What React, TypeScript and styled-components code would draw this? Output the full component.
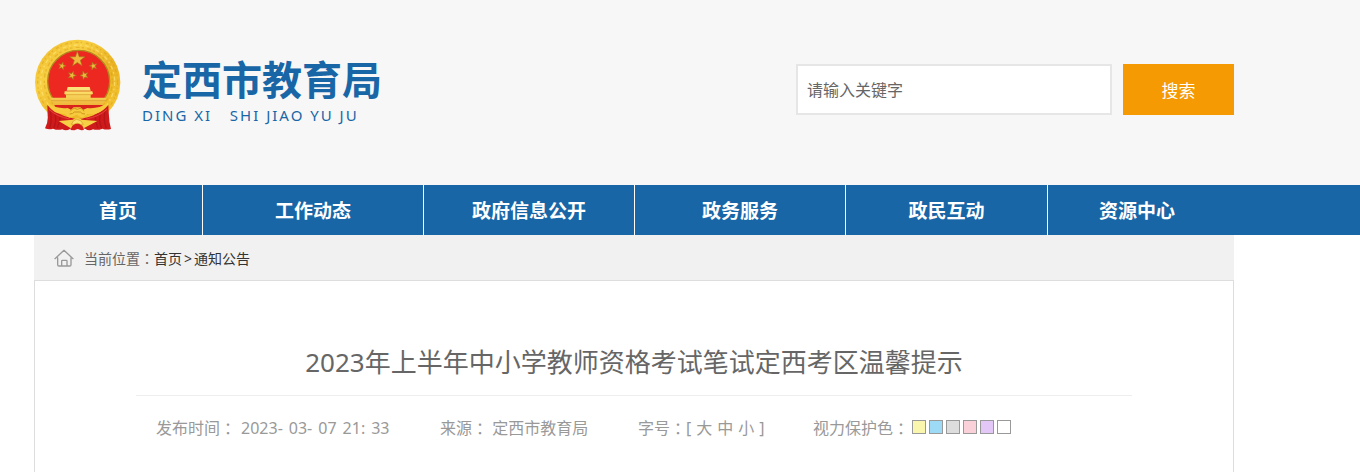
import React from 'react';
import styled, { createGlobalStyle } from 'styled-components';

const GlobalStyle = createGlobalStyle`
  * { box-sizing: border-box; }
  body {
    margin: 0;
    background: #fff;
    color: #666;
    font-family: 'Noto Sans', 'Noto Sans CJK SC', sans-serif;
    font-size: 16px;
  }
  a { color: inherit; text-decoration: none; }
  h1, h2, p, ul { margin: 0; padding: 0; }
  button, input { font-family: inherit; }
`;

const Container = styled.div`
  max-width: 1360px;
  padding: 0 126px 0 34px;
`;

const Header = styled.header`
  background: #f7f7f7;
`;

const HeaderRow = styled(Container)`
  display: flex;
  align-items: center;
  justify-content: space-between;
  min-height: 185px;
  padding-bottom: 6px;
`;

const Brand = styled.a`
  display: flex;
  align-items: center;
  gap: 20px;
  padding-bottom: 10px;
  color: #1966a7;
`;

const BrandText = styled.div`
  padding-top: 12px;
`;

const BrandName = styled.h1`
  font-size: 40px;
  line-height: 48px;
  font-weight: 700;
`;

const BrandPinyin = styled.p`
  font-size: 15px;
  line-height: 22px;
  letter-spacing: 2px;
  white-space: pre;
`;

const SearchForm = styled.form`
  display: flex;
  gap: 11px;
`;

const SearchInput = styled.input`
  width: 316px;
  height: 51px;
  padding: 0 9px;
  border: 2px solid #e6e6e6;
  background: #fff;
  color: #666;
  font-size: 16px;
  &::placeholder { color: #666; opacity: 1; }
`;

const SearchButton = styled.button`
  width: 111px;
  height: 51px;
  border: 0;
  padding: 0;
  background: #f59a02;
  color: #fff;
  font-size: 17px;
`;

const Nav = styled.nav`
  background: #1966a7;
`;

const NavList = styled.ul`
  display: grid;
  grid-template-columns: 169fr 221fr 211fr 211fr 202fr 178fr;
  padding-right: 8px;
  list-style: none;
`;

const NavItem = styled.li`
  border-right: 1px solid #fff;
  &:last-child { border-right: 0; }
`;

const NavLink = styled.a`
  display: block;
  padding-top: 2px;
  color: #fff;
  font-size: 19px;
  font-weight: 700;
  line-height: 48px;
  text-align: center;
`;

const Breadcrumb = styled.nav`
  display: flex;
  align-items: center;
  height: 45px;
  padding: 0 20px;
  background: #f1f1f1;
  font-size: 14px;
  svg { margin-right: 10px; }
`;

const Crumbs = styled.span`
  display: flex;
  align-items: baseline;
  gap: 2px;
  color: #333;
`;

const Colon = styled.span`
  font-family: 'Noto Sans CJK TC', sans-serif;
`;

const Article = styled.article`
  padding: 56px 101px 32px;
  border: 1px solid #ddd;
  border-bottom: 0;
`;

const Title = styled.h2`
  padding-bottom: 8px;
  border-bottom: 1px solid #eee;
  font-size: 26px;
  line-height: 50px;
  font-weight: 400;
  text-align: center;
`;

const Meta = styled.div`
  display: grid;
  grid-template-columns: 284px 198px 175px auto;
  padding: 20px 20px 0;
  color: #999;
  font-size: 16px;
  line-height: 24px;
`;

const MetaItem = styled.div`
  display: flex;
  white-space: pre;
`;

const DateParts = styled.time`
  display: flex;
  gap: 6px;
  padding-left: 5px;
`;

const SizeList = styled.span`
  display: flex;
  gap: 5px;
`;

const SizeButton = styled.button`
  padding: 0;
  border: 0;
  background: none;
  color: inherit;
  font-size: 16px;
  line-height: 24px;
`;

const Swatches = styled.span`
  display: flex;
  gap: 3px;
  padding: 4px 0 0 3px;
`;

const Swatch = styled.button<{ $color: string }>`
  width: 14px;
  height: 14px;
  padding: 0;
  border: 1px solid #999;
  background: ${({ $color }) => $color};
`;

const star = (cx: number, cy: number, r: number, turn = 0) =>
  Array.from({ length: 10 }, (_, i) => {
    const radius = i % 2 ? r * 0.4 : r;
    const angle = ((i * 36 - 90 + turn) * Math.PI) / 180;
    return `${cx + radius * Math.cos(angle)},${cy + radius * Math.sin(angle)}`;
  }).join(' ');

const Emblem = () => (
  <svg width="88" height="92" viewBox="27 27 264 276" aria-hidden="true">
    <defs>
      <linearGradient id="gold" x1="0" y1="0" x2="1" y2="1">
        <stop offset="0" stopColor="#edb92a" />
        <stop offset="0.3" stopColor="#f8d043" />
        <stop offset="0.6" stopColor="#eab324" />
        <stop offset="1" stopColor="#f9cd38" />
      </linearGradient>
      <linearGradient id="gate" x1="0" y1="0" x2="0" y2="1">
        <stop offset="0" stopColor="#fbe06a" />
        <stop offset="1" stopColor="#efb53a" />
      </linearGradient>
    </defs>
    <circle cx="158" cy="157" r="128" fill="url(#gold)" />
    <circle cx="158" cy="157" r="120" fill="none" stroke="#d99e1c" strokeOpacity="0.5" strokeWidth="4" strokeDasharray="9 7 4 11" />
    <circle cx="158" cy="156" r="111" fill="none" stroke="#ffe880" strokeOpacity="0.6" strokeWidth="4" strokeDasharray="12 8 5 9" />
    <circle cx="160" cy="154" r="102" fill="none" stroke="#d99e1c" strokeOpacity="0.5" strokeWidth="4" strokeDasharray="7 10 12 6" />
    <circle cx="161" cy="154" r="93" fill="#ec2820" stroke="#b08a1e" strokeWidth="4" />
    <g fill="#f0b93c" stroke="#a5761c" strokeWidth="2">
      <polygon points={star(157, 88, 24)} />
      <polygon points={star(111, 108, 12, 15)} />
      <polygon points={star(205, 108, 12, -15)} />
      <polygon points={star(141, 136, 13, 20)} />
      <polygon points={star(178, 136, 13, -20)} />
    </g>
    <path d="M128 171h66l3 11h-72z" fill="#fbe37a" />
    <path d="M119 184h83l2 8-7 2v9h48l-12 22H88l-13-22h48v-9l-5-2z" fill="url(#gate)" />
    <path d="M126 183h70M121 194h78M78 212h166" stroke="#d79a2a" strokeWidth="2" fill="none" />
    <path d="M88 225h146l-10 14-40 4h-58l-32-5z" fill="#d9221c" />
    <path d="M67 225q16 18 40 28 16 9 42 13h20q26-4 42-13 24-10 39-28 1 22 2 34 0 18 6 38-14 4-26-1-14 6-28 2-12 6-24-2l-22-4-22 4q-12 8-24 2-14 4-28-2-12 4-24-1 10-18 8-38z" fill="#cf1a1c" />
    <path d="M76 244q6 24-2 50M90 254q6 20-4 40M105 262q0 14-8 32M240 244q-6 24 4 50M226 254q-6 20 4 40M211 262q0 14 8 32" stroke="#a51014" strokeOpacity="0.6" strokeWidth="4" fill="none" />
    <path d="M72 238q24 22 62 29M246 238q-24 22-62 29" stroke="#e8433a" strokeWidth="3" fill="none" />
    <path d="M101 273l42-4q15-10 28 0l46 4-41 22-9-11q-10-7-20 0l-7 12z" fill="#f7cf45" />
    <path d="M139 283l7-11 9-4 12 4 8 11h-8q-10-7-20 0z" fill="#fbe06a" stroke="#d09a25" strokeWidth="2" />
    <path d="M136 300l6-13q15-10 30 0l5 13-8 1-11-4-10 4z" fill="#d51f1c" />
    <path d="M68 220q30 18 60 14l10 5 8-7h20l9 7 12-5q30 4 62-14-12 26-38 31l-25 2-14 10-9-4q-9-7-18 0l-12 4-14-10-20-3q-24-8-31-30z" fill="#f6ca3c" />
    <path d="M136 244q4-9 13-9l8 3 8-3q8 0 12 9M134 252q10 0 14-6h18q4 6 14 6" stroke="#cf9420" strokeWidth="3" fill="none" />
  </svg>
);

const HomeIcon = () => (
  <svg width="20" height="18" viewBox="0 0 60 54" fill="none" stroke="#999" strokeWidth="4" strokeLinejoin="round" strokeLinecap="round" aria-hidden="true">
    <path d="M3 29L30 4l27 25M11 27v20q0 4 4 4h32q4 0 4-4V27M23 51V36q0-2 2-2h12q2 0 2 2v15" />
  </svg>
);

const navItems = ['首页', '工作动态', '政府信息公开', '政务服务', '政民互动', '资源中心'];

const dateParts = ['2023-', '03-', '07', '21:', '33'];

const swatches = [
  { name: '黄色', color: '#faf6ae' },
  { name: '蓝色', color: '#9ddaf5' },
  { name: '灰色', color: '#dddddd' },
  { name: '粉色', color: '#fad1d8' },
  { name: '紫色', color: '#e3c8f7' },
  { name: '白色', color: '#ffffff' },
];

export default function App() {
  return (
    <>
      <GlobalStyle />
      <Header>
        <HeaderRow>
          <Brand href="#">
            <Emblem />
            <BrandText>
              <BrandName>定西市教育局</BrandName>
              <BrandPinyin>{'DING XI   SHI JIAO YU JU'}</BrandPinyin>
            </BrandText>
          </Brand>
          <SearchForm role="search" onSubmit={(e) => e.preventDefault()}>
            <SearchInput type="text" aria-label="请输入关键字" placeholder="请输入关键字" />
            <SearchButton type="submit">搜索</SearchButton>
          </SearchForm>
        </HeaderRow>
      </Header>
      <Nav>
        <Container>
          <NavList>
            {navItems.map((label) => (
              <NavItem key={label}>
                <NavLink href="#">{label}</NavLink>
              </NavItem>
            ))}
          </NavList>
        </Container>
      </Nav>
      <Container as="main">
        <Breadcrumb>
          <HomeIcon />
          <span>当前位置<Colon>：</Colon></span>
          <Crumbs>
            <a href="#">首页</a>
            <span>&gt;</span>
            <a href="#">通知公告</a>
          </Crumbs>
        </Breadcrumb>
        <Article>
          <Title>2023年上半年中小学教师资格考试笔试定西考区温馨提示</Title>
          <Meta>
            <MetaItem>
              发布时间<Colon>：</Colon>
              <DateParts dateTime="2023-03-07T21:33">
                {dateParts.map((part) => (
                  <span key={part}>{part}</span>
                ))}
              </DateParts>
            </MetaItem>
            <MetaItem>来源<Colon>：</Colon>{' 定西市教育局'}</MetaItem>
            <MetaItem>
              字号<Colon>：</Colon>
              <SizeList>
                <span>[</span>
                <SizeButton type="button">大</SizeButton>
                <SizeButton type="button">中</SizeButton>
                <SizeButton type="button">小</SizeButton>
                <span>]</span>
              </SizeList>
            </MetaItem>
            <MetaItem>
              视力保护色<Colon>：</Colon>
              <Swatches>
                {swatches.map(({ name, color }) => (
                  <Swatch key={name} type="button" aria-label={name} $color={color} />
                ))}
              </Swatches>
            </MetaItem>
          </Meta>
        </Article>
      </Container>
    </>
  );
}
